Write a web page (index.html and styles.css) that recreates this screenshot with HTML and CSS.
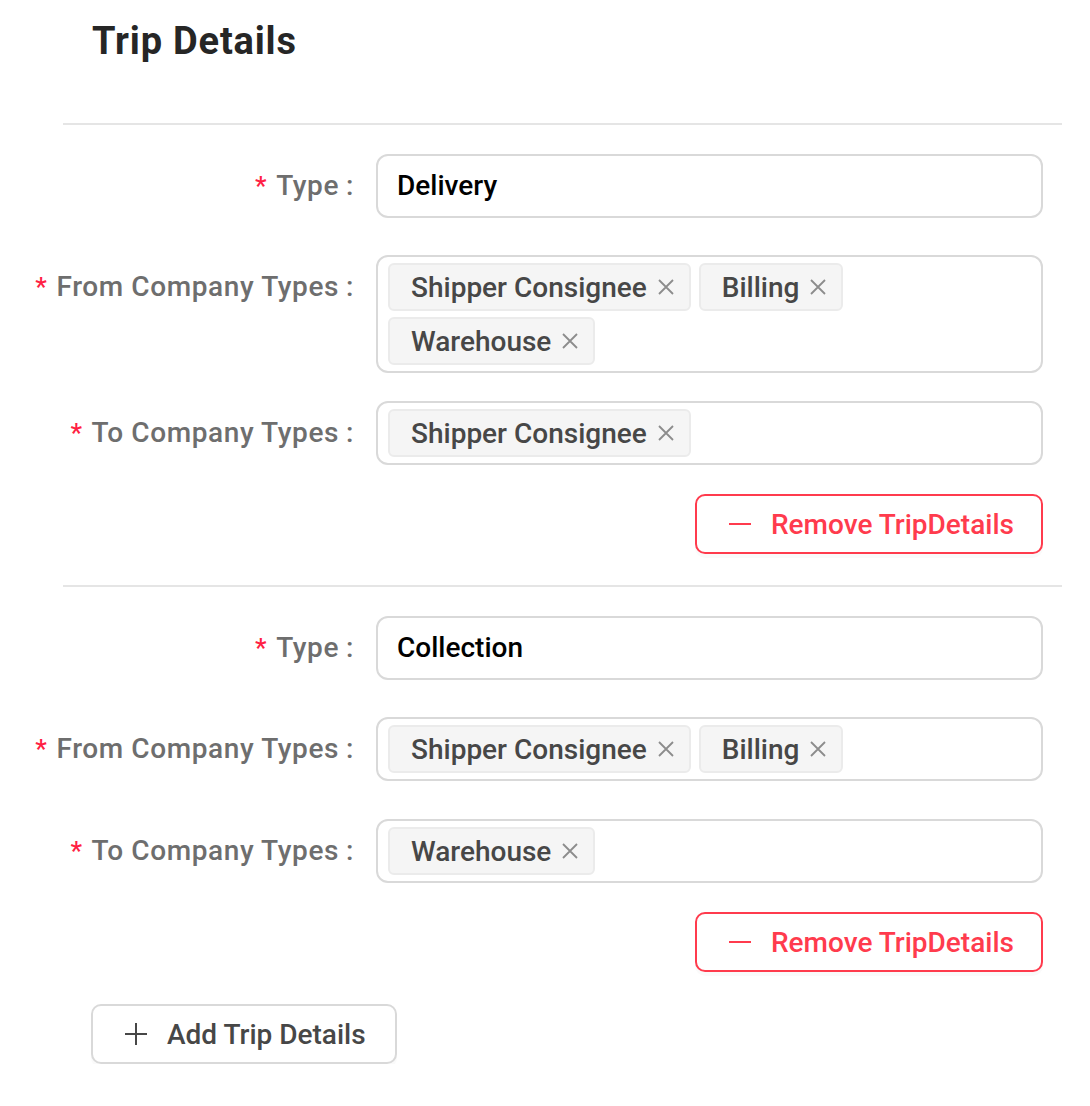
FILE: index.html
```html
<!DOCTYPE html>
<html lang="en">
<head>
<meta charset="utf-8">
<title>Trip Details</title>
<link rel="stylesheet" href="styles.css">
</head>
<body>
<div class="page">
  <h1 class="title">Trip Details</h1>

  <section class="trip">
    <div class="row row-single">
      <div class="label"><span class="req">*</span><span>Type</span></div>
      <div class="input">Delivery</div>
    </div>
    <div class="row row-multi">
      <div class="label"><span class="req">*</span><span>From Company Types</span></div>
      <div class="select">
        <span class="tag">Shipper Consignee<svg class="x" viewBox="0 0 18 18"><path d="M2 2L16 16M16 2L2 16"/></svg></span>
        <span class="tag">Billing<svg class="x" viewBox="0 0 18 18"><path d="M2 2L16 16M16 2L2 16"/></svg></span>
        <span class="tag">Warehouse<svg class="x" viewBox="0 0 18 18"><path d="M2 2L16 16M16 2L2 16"/></svg></span>
      </div>
    </div>
    <div class="row row-last">
      <div class="label"><span class="req">*</span><span>To Company Types</span></div>
      <div class="select">
        <span class="tag">Shipper Consignee<svg class="x" viewBox="0 0 18 18"><path d="M2 2L16 16M16 2L2 16"/></svg></span>
      </div>
    </div>
    <div class="actions">
      <button class="btn btn-danger"><svg class="ico" viewBox="0 0 22 22"><path d="M0 11H22"/></svg>Remove TripDetails</button>
    </div>
  </section>

  <section class="trip">
    <div class="row row-single">
      <div class="label"><span class="req">*</span><span>Type</span></div>
      <div class="input">Collection</div>
    </div>
    <div class="row row-mid">
      <div class="label"><span class="req">*</span><span>From Company Types</span></div>
      <div class="select">
        <span class="tag">Shipper Consignee<svg class="x" viewBox="0 0 18 18"><path d="M2 2L16 16M16 2L2 16"/></svg></span>
        <span class="tag">Billing<svg class="x" viewBox="0 0 18 18"><path d="M2 2L16 16M16 2L2 16"/></svg></span>
      </div>
    </div>
    <div class="row row-last">
      <div class="label"><span class="req">*</span><span>To Company Types</span></div>
      <div class="select">
        <span class="tag">Warehouse<svg class="x" viewBox="0 0 18 18"><path d="M2 2L16 16M16 2L2 16"/></svg></span>
      </div>
    </div>
    <div class="actions actions-last">
      <button class="btn btn-danger"><svg class="ico" viewBox="0 0 22 22"><path d="M0 11H22"/></svg>Remove TripDetails</button>
    </div>
  </section>

  <button class="btn btn-add"><svg class="ico" viewBox="0 0 22 22"><path d="M0 11H22M11 0V22"/></svg>Add Trip Details</button>
</div>
</body>
</html>
```

FILE: styles.css
```css
* { box-sizing: border-box; }

body {
  margin: 0;
  background: #fff;
  font-family: Roboto, "Liberation Sans", sans-serif;
  font-size: 28px;
  color: #1f1f1f;
}

.page {
  width: 999px;
  margin-left: 63px;
  padding-top: 20px;
}

.title {
  margin: 0 0 60px 29px;
  font-size: 38px;
  line-height: 43px;
  font-weight: 700;
  letter-spacing: 0.8px;
  color: #262626;
}

.trip {
  border-top: 2px solid #e5e5e5;
  padding-top: 29px;
}

.row {
  display: grid;
  grid-template-columns: 313px 667px;
  align-items: start;
}

.row-single { margin-bottom: 37px; }
.row-multi { margin-bottom: 28px; }
.row-mid { margin-bottom: 38px; }
.row-last { margin-bottom: 29px; }

.label {
  display: flex;
  justify-content: flex-end;
  align-items: center;
  height: 64px;
  line-height: 64px;
  color: #6e6e6e;
  font-weight: 500;
  letter-spacing: 0.6px;
  white-space: nowrap;
}

.label::after {
  content: ":";
  margin: 0 22px 0 7px;
}

.req {
  color: #ff1f44;
  margin-right: 9px;
  font-size: 26px;
}

.input {
  height: 64px;
  border: 2px solid #d9d9d9;
  border-radius: 12px;
  padding: 0 19px;
  line-height: 60px;
  color: #000;
  font-weight: 500;
}

.select {
  min-height: 64px;
  border: 2px solid #d9d9d9;
  border-radius: 12px;
  padding: 6px 10px;
  display: flex;
  flex-wrap: wrap;
  gap: 6px 8px;
}

.tag {
  height: 48px;
  display: inline-flex;
  align-items: center;
  gap: 10px;
  padding: 0 14px 0 21px;
  background: #f5f5f5;
  border: 2px solid #ebebeb;
  border-radius: 6px;
  color: #474747;
  font-weight: 500;
}

.x {
  width: 18px;
  height: 18px;
  fill: none;
  stroke: #8c8c8c;
  stroke-width: 1.8;
}

.actions {
  display: flex;
  justify-content: flex-end;
  padding-right: 19px;
  margin-bottom: 31px;
}

.actions-last { margin-bottom: 32px; }

.btn {
  display: inline-flex;
  align-items: center;
  height: 60px;
  background: #fff;
  border-radius: 10px;
  font-family: inherit;
  font-size: 28px;
  font-weight: 500;
  cursor: pointer;
  box-shadow: 0 4px 0 rgba(0, 0, 0, 0.02);
}

.btn .ico {
  width: 22px;
  height: 22px;
  fill: none;
  stroke: currentColor;
  stroke-width: 2;
  margin-right: 20px;
}

.btn-danger {
  width: 348px;
  padding: 0 0 0 32px;
  border: 2px solid #ff3b4d;
  color: #ff3b4d;
}

.btn-add {
  margin-left: 28px;
  width: 306px;
  padding: 0 0 0 32px;
  border: 2px solid #d9d9d9;
  color: #474747;
}
```
